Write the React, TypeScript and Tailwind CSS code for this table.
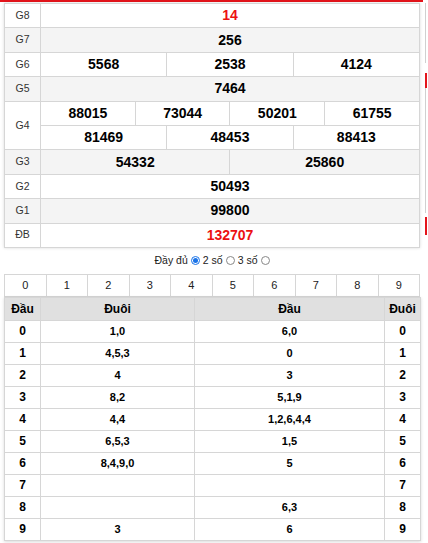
const prizes: { label: string; rows: string[][]; red?: boolean }[] = [
  { label: "G8", rows: [["14"]], red: true },
  { label: "G7", rows: [["256"]] },
  { label: "G6", rows: [["5568", "2538", "4124"]] },
  { label: "G5", rows: [["7464"]] },
  { label: "G4", rows: [["88015", "73044", "50201", "61755"], ["81469", "48453", "88413"]] },
  { label: "G3", rows: [["54332", "25860"]] },
  { label: "G2", rows: [["50493"]] },
  { label: "G1", rows: [["99800"]] },
  { label: "ĐB", rows: [["132707"]], red: true },
]

const loto = [
  ["0", "1,0", "6,0", "0"],
  ["1", "4,5,3", "0", "1"],
  ["2", "4", "3", "2"],
  ["3", "8,2", "5,1,9", "3"],
  ["4", "4,4", "1,2,6,4,4", "4"],
  ["5", "6,5,3", "1,5", "5"],
  ["6", "8,4,9,0", "5", "6"],
  ["7", "", "", "7"],
  ["8", "", "6,3", "8"],
  ["9", "3", "6", "9"],
]

const Radio = ({ checked }: { checked?: boolean }) => (
  <span
    className={
      "inline-flex items-center justify-center w-[9px] h-[9px] rounded-full border " +
      (checked ? "border-[#1a73e8] bg-white" : "border-[#888] bg-white")
    }
  >
    {checked && <span className="w-[5px] h-[5px] rounded-full bg-[#1a73e8]" />}
  </span>
)

export default function App() {
  return (
    <div className="flex w-[428px] h-[543px] bg-white overflow-hidden font-['Liberation_Sans',Arial,sans-serif] text-black">
      <div className="w-[423px] shrink-0 border-t-2 border-[#e4141b] pl-[4px] pr-[3px] pt-[1px]">
        <table className="w-[416px] table-fixed border-collapse shadow-[0_0_3px_rgba(0,0,0,0.15)]">
          <colgroup>
            <col className="w-[36px]" />
            {Array.from({ length: 12 }).map((_, i) => (
              <col key={i} />
            ))}
          </colgroup>
          <tbody>
            {prizes.map((p, pi) =>
              p.rows.map((r, ri) => (
                <tr key={p.label + ri} className={"h-[24.4px] " + (pi % 2 === 1 ? "bg-[#f4f4f4]" : "bg-white")}>
                  {ri === 0 && (
                    <td rowSpan={p.rows.length} className="border border-[#d6d6d6] text-center text-[10.5px] text-[#333] p-0">
                      {p.label}
                    </td>
                  )}
                  {r.map((v, vi) => (
                    <td
                      key={vi}
                      colSpan={12 / r.length}
                      className={
                        "border border-[#d6d6d6] text-center text-[14px] font-bold p-0 " +
                        (p.red ? "text-[#ec1111]" : "text-black")
                      }
                    >
                      {v}
                    </td>
                  ))}
                </tr>
              ))
            )}
          </tbody>
        </table>

        <div className="h-[26px] flex items-center justify-center gap-[3px] text-[10.5px] text-[#222]">
          <span>Đầy đủ</span>
          <Radio checked />
          <span>2 số</span>
          <Radio />
          <span>3 số</span>
          <Radio />
        </div>

        <table className="w-[416px] table-fixed border-collapse">
          <tbody>
            <tr className="h-[22px]">
              {Array.from({ length: 10 }).map((_, i) => (
                <td key={i} className="border border-[#d6d6d6] text-center text-[11px] text-[#222] p-0">
                  {i}
                </td>
              ))}
            </tr>
          </tbody>
        </table>

        <table className="w-[416px] table-fixed border-collapse shadow-[0_1px_3px_rgba(0,0,0,0.15)]">
          <colgroup>
            <col className="w-[36px]" />
            <col className="w-[154px]" />
            <col className="w-[190px]" />
            <col className="w-[36px]" />
          </colgroup>
          <thead>
            <tr className="h-[23px] bg-[#e0e0e0]">
              {["Đầu", "Đuôi", "Đầu", "Đuôi"].map((h, i) => (
                <th key={i} className="border border-[#d6d6d6] text-center text-[12px] font-bold p-0">
                  {h}
                </th>
              ))}
            </tr>
          </thead>
          <tbody>
            {loto.map((r) => (
              <tr key={r[0]} className="h-[22px] bg-white">
                <td className="border border-[#d6d6d6] text-center text-[12px] font-bold p-0">{r[0]}</td>
                <td className="border border-[#d6d6d6] text-center text-[11px] font-bold p-0">{r[1]}</td>
                <td className="border border-[#d6d6d6] text-center text-[11px] font-bold p-0">{r[2]}</td>
                <td className="border border-[#d6d6d6] text-center text-[12px] font-bold p-0">{r[3]}</td>
              </tr>
            ))}
          </tbody>
        </table>
      </div>

      <div className="flex-1 pl-[2px]">
        <div className="mt-[3px] h-[60px] border-l border-[#d0d0d0]" />
        <div className="mt-[10px] h-[15px] border-l-2 border-[#e4141b]" />
        <div className="h-[125px] border-l border-[#d0d0d0]" />
        <div className="mt-[4px] h-[18px] border-l-2 border-[#e4141b]" />
      </div>
    </div>
  )
}
